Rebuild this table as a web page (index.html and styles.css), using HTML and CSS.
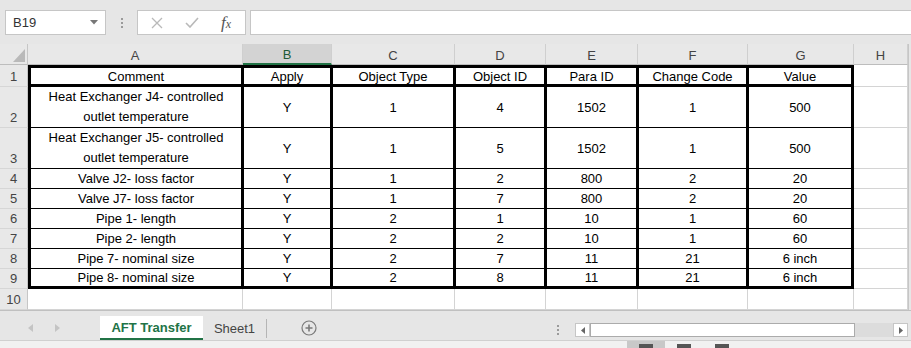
FILE: index.html
```html
<!DOCTYPE html>
<html lang="en">
<head>
    <meta charset="UTF-8">
    <meta name="viewport" content="width=device-width, initial-scale=1.0">
    <title>AFT Transfer</title>
    <link rel="stylesheet" href="styles.css">
</head>
<body>

<!-- name box + formula bar -->
<div class="formula-bar">
    <div class="name-box">
        <span>B19</span>
        <svg width="8" height="5" viewBox="0 0 8 5"><path d="M0 0H8L4 4.5Z" fill="#777"/></svg>
    </div>
    <div class="grip"><i></i><i></i><i></i></div>
    <div class="fx-box">
        <svg class="fx-cancel" width="12" height="12" viewBox="0 0 12 12"><path d="M1 1L11 11M11 1L1 11" stroke="#b9b9b9" stroke-width="1.3"/></svg>
        <svg class="fx-enter" width="14" height="11" viewBox="0 0 14 11"><path d="M1 6L5 10L13 1" stroke="#b9b9b9" stroke-width="1.6" fill="none"/></svg>
        <span class="fx">f<small>x</small></span>
    </div>
    <div class="formula-input"></div>
</div>

<!-- worksheet grid -->
<div class="sheet">
    <div class="corner"><svg width="12" height="13" viewBox="0 0 12 13"><path d="M12 0V13H0Z" fill="#b9b9b9"/></svg></div>
    <div class="ch">A</div>
    <div class="ch selected">B</div>
    <div class="ch">C</div>
    <div class="ch">D</div>
    <div class="ch">E</div>
    <div class="ch">F</div>
    <div class="ch">G</div>
    <div class="ch">H</div>
    <div class="edge"></div>

    <div class="rh">1</div>
    <div class="c t a r1">Comment</div>
    <div class="c t r1">Apply</div>
    <div class="c t r1">Object Type</div>
    <div class="c t r1">Object ID</div>
    <div class="c t r1">Para ID</div>
    <div class="c t r1">Change Code</div>
    <div class="c t g r1">Value</div>
    <div class="c"></div>
    <div class="edge"></div>

    <div class="rh">2</div>
    <div class="c t a wrap">Heat Exchanger J4- controlled outlet temperature</div>
    <div class="c t">Y</div>
    <div class="c t">1</div>
    <div class="c t">4</div>
    <div class="c t">1502</div>
    <div class="c t">1</div>
    <div class="c t g">500</div>
    <div class="c"></div>
    <div class="edge"></div>

    <div class="rh">3</div>
    <div class="c t a wrap">Heat Exchanger J5- controlled outlet temperature</div>
    <div class="c t">Y</div>
    <div class="c t">1</div>
    <div class="c t">5</div>
    <div class="c t">1502</div>
    <div class="c t">1</div>
    <div class="c t g">500</div>
    <div class="c"></div>
    <div class="edge"></div>

    <div class="rh">4</div>
    <div class="c t a">Valve J2- loss factor</div>
    <div class="c t">Y</div>
    <div class="c t">1</div>
    <div class="c t">2</div>
    <div class="c t">800</div>
    <div class="c t">2</div>
    <div class="c t g">20</div>
    <div class="c"></div>
    <div class="edge"></div>

    <div class="rh">5</div>
    <div class="c t a">Valve J7- loss factor</div>
    <div class="c t">Y</div>
    <div class="c t">1</div>
    <div class="c t">7</div>
    <div class="c t">800</div>
    <div class="c t">2</div>
    <div class="c t g">20</div>
    <div class="c"></div>
    <div class="edge"></div>

    <div class="rh">6</div>
    <div class="c t a">Pipe 1- length</div>
    <div class="c t">Y</div>
    <div class="c t">2</div>
    <div class="c t">1</div>
    <div class="c t">10</div>
    <div class="c t">1</div>
    <div class="c t g">60</div>
    <div class="c"></div>
    <div class="edge"></div>

    <div class="rh">7</div>
    <div class="c t a">Pipe 2- length</div>
    <div class="c t">Y</div>
    <div class="c t">2</div>
    <div class="c t">2</div>
    <div class="c t">10</div>
    <div class="c t">1</div>
    <div class="c t g">60</div>
    <div class="c"></div>
    <div class="edge"></div>

    <div class="rh">8</div>
    <div class="c t a">Pipe 7- nominal size</div>
    <div class="c t">Y</div>
    <div class="c t">2</div>
    <div class="c t">7</div>
    <div class="c t">11</div>
    <div class="c t">21</div>
    <div class="c t g">6 inch</div>
    <div class="c"></div>
    <div class="edge"></div>

    <div class="rh">9</div>
    <div class="c t a r9">Pipe 8- nominal size</div>
    <div class="c t r9">Y</div>
    <div class="c t r9">2</div>
    <div class="c t r9">8</div>
    <div class="c t r9">11</div>
    <div class="c t r9">21</div>
    <div class="c t g r9">6 inch</div>
    <div class="c"></div>
    <div class="edge"></div>

    <div class="rh">10</div>
    <div class="c"></div>
    <div class="c"></div>
    <div class="c"></div>
    <div class="c"></div>
    <div class="c"></div>
    <div class="c"></div>
    <div class="c"></div>
    <div class="c"></div>
    <div class="edge"></div>
</div>

<!-- sheet tabs and horizontal scrollbar -->
<div class="tabbar">
    <div class="tab-nav">
        <svg width="5" height="8" viewBox="0 0 5 8"><path d="M5 0V8L0 4Z" fill="#c4c4c4"/></svg>
        <svg width="5" height="8" viewBox="0 0 5 8"><path d="M0 0V8L5 4Z" fill="#c4c4c4"/></svg>
    </div>
    <div class="tab active">AFT Transfer</div>
    <div class="tab">Sheet1</div>
    <div class="tab-add">
        <svg width="16" height="16" viewBox="0 0 16 16"><circle cx="8" cy="8" r="7" fill="none" stroke="#7a7a7a" stroke-width="1.2"/><path d="M8 4.5V11.5M4.5 8H11.5" stroke="#7a7a7a" stroke-width="1.6"/></svg>
    </div>
    <div class="spacer"></div>
    <div class="grip split"><i></i><i></i><i></i></div>
    <div class="hscroll">
        <div class="sb-btn"><svg width="4" height="7" viewBox="0 0 4 7"><path d="M4 0V7L0 3.5Z" fill="#666"/></svg></div>
        <div class="sb-thumb"></div>
        <div class="sb-track"></div>
        <div class="sb-btn"><svg width="4" height="7" viewBox="0 0 4 7"><path d="M0 0V7L4 3.5Z" fill="#666"/></svg></div>
    </div>
</div>

<div class="status">
    <div class="view-btn on"><i></i></div>
    <div class="view-btn"><i></i></div>
    <div class="view-btn"><i></i></div>
</div>

</body>
</html>
```

FILE: styles.css
```css
* {
    box-sizing: border-box;
}
body {
    margin: 0;
    width: 911px;
    height: 348px;
    overflow: hidden;
    background-color: #e6e6e6;
    font-family: "Liberation Sans", Arial, sans-serif;
    font-size: 13px;
    color: #000;
}

/* formula bar */
.formula-bar {
    display: flex;
    height: 25px;
    margin: 10px 0 9px 5px;
}
.name-box {
    width: 101px;
    background-color: #fff;
    border: 1px solid #c6c6c6;
    display: flex;
    align-items: center;
    justify-content: space-between;
    padding: 0 7px 0 7px;
    color: #333;
}
.grip {
    width: 31px;
    display: flex;
    flex-direction: column;
    align-items: center;
    justify-content: center;
    gap: 2px;
}
.grip i {
    width: 2px;
    height: 2px;
    background-color: #9a9a9a;
}
.fx-box {
    width: 109px;
    background-color: #fff;
    border: 1px solid #c6c6c6;
    display: flex;
    align-items: center;
    padding-left: 13px;
}
.fx-enter {
    margin-left: 22px;
}
.fx {
    margin-left: 22px;
    font-family: "Liberation Serif", serif;
    font-style: italic;
    font-size: 17px;
    color: #555;
}
.fx small {
    font-size: 12px;
}
.formula-input {
    flex: 1;
    margin-left: 4px;
    background-color: #fff;
    border: 1px solid #c6c6c6;
    border-right: none;
}

/* worksheet */
.sheet {
    display: grid;
    grid-template-columns: 28px 215px 89px 123px 91px 92px 110px 106px 54px 3px;
    grid-template-rows: 21px 22px 41px 41px repeat(6, 20px) 21px;
    background-color: #fff;
}
.corner {
    background-color: #e8e8e8;
    border-right: 1px solid #c6c6c6;
    border-bottom: 1px solid #bdbdbd;
    display: flex;
    align-items: flex-end;
    justify-content: flex-end;
    padding: 0 2px 2px 0;
}
.ch {
    background-color: #e8e8e8;
    border-right: 1px solid #cfcfcf;
    border-bottom: 1px solid #bdbdbd;
    color: #444;
    display: flex;
    align-items: center;
    justify-content: center;
    padding-top: 2px;
}
.ch.selected {
    background-color: #d3d3d3;
    border-bottom: 2px solid #217346;
    color: #1e5b38;
}
.rh {
    background-color: #e8e8e8;
    border-right: 1px solid #c6c6c6;
    border-bottom: 1px solid #d6d6d6;
    color: #444;
    display: flex;
    align-items: flex-end;
    justify-content: center;
    padding-bottom: 2px;
}
.edge {
    background-color: #e6e6e6;
    border-left: 1px solid #c6c6c6;
}
.c {
    border-right: 1px solid #d4d4d4;
    border-bottom: 1px solid #d4d4d4;
    display: flex;
    align-items: center;
    justify-content: center;
    text-align: center;
    white-space: nowrap;
}

/* bordered data table */
.t {
    border-left: 1px solid #000;
    border-right: 2px solid #000;
    border-bottom: 1px solid #000;
}
.t.a {
    border-left: 3px solid #000;
}
.t.g {
    border-right: 3px solid #000;
}
.t.r1 {
    border-top: 3px solid #000;
    border-bottom: 3px solid #000;
}
.t.r9 {
    border-bottom: 3px solid #000;
}
.wrap {
    white-space: normal;
    line-height: 20px;
    padding: 0 8px;
}

/* sheet tabs */
.tabbar {
    height: 30px;
    display: flex;
    padding-top: 5px;
    border-top: 1px solid #c0c0c0;
}
.tab-nav {
    width: 100px;
    display: flex;
    align-items: center;
    gap: 22px;
    padding-left: 28px;
}
.tab {
    width: 64px;
    display: flex;
    align-items: center;
    justify-content: center;
    color: #444;
    border-right: 1px solid #b5b5b5;
    margin: 3px 0 2px;
}
.tab.active {
    width: 103px;
    margin: 0;
    background-color: #fff;
    border-right: none;
    border-bottom: 2px solid #217346;
    color: #217346;
    font-weight: bold;
}
.tab-add {
    width: 84px;
    display: flex;
    align-items: center;
    justify-content: center;
}
.spacer {
    flex: 1;
}
.grip.split {
    width: 12px;
    height: 14px;
    margin-top: 7px;
    margin-right: 11px;
}
.hscroll {
    width: 333px;
    height: 14px;
    margin: 7px 3px 0 0;
    display: flex;
}
.sb-btn {
    width: 15px;
    background-color: #fff;
    border: 1px solid #c6c6c6;
    display: flex;
    align-items: center;
    justify-content: center;
}
.sb-thumb {
    width: 265px;
    background-color: #fff;
    border: 1px solid #ababab;
}
.sb-track {
    flex: 1;
    background-color: #dcdcdc;
}

/* status bar view buttons */
.status {
    height: 8px;
    background-color: #f1f1f1;
    border-top: 1px solid #d0d0d0;
    display: flex;
    padding-left: 627px;
}
.view-btn {
    width: 38px;
    display: flex;
    justify-content: center;
    padding-top: 3px;
}
.view-btn.on {
    background-color: #c8c8c8;
}
.view-btn i {
    width: 14px;
    height: 4px;
    background-color: #555;
}
```
